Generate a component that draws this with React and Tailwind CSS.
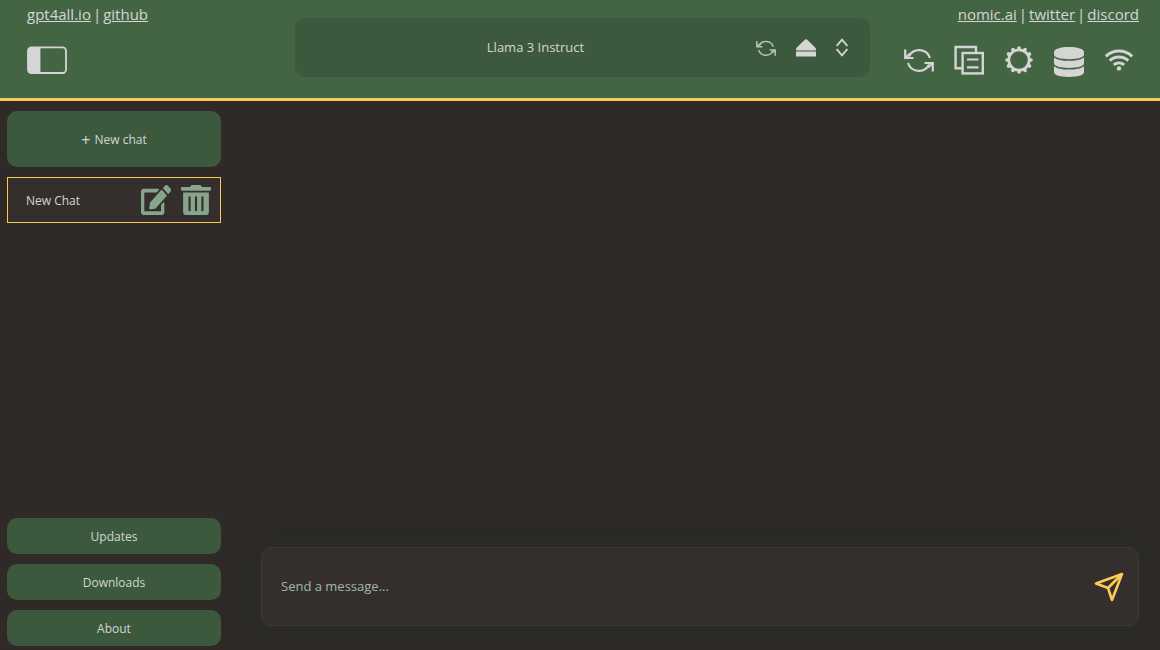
import { useState } from 'react'
import { FaEdit, FaTrashAlt } from 'react-icons/fa'

const models = ['Llama 3 Instruct']

function RefreshIcon({ className }) {
  return (
    <svg viewBox="0 0 30 30" className={className} fill="none" stroke="currentColor" strokeWidth="2.2">
      <path d="M4.8 11.5A11.5 11.5 0 0 1 26 13" />
      <path d="M1.2 4.5V13H9.5M1.5 12.8L6 8.5" />
      <path d="M4 18A11.5 11.5 0 0 0 25.2 19.5" />
      <path d="M28.8 26.5V18H20.5M28.5 18.2L24 22.5" />
    </svg>
  )
}

function CopyIcon() {
  return (
    <svg viewBox="0 0 30 30" className="size-[30px]" fill="none" stroke="currentColor" strokeWidth="2.4">
      <path d="M8 23.3H1.6V2H22V7.5" />
      <rect x="8.6" y="8" width="20.2" height="20.4" />
      <path d="M13 14.5H24.5M13 22.3H24.5" strokeWidth="2.2" />
    </svg>
  )
}

function GearIcon() {
  return (
    <svg viewBox="0 0 30 30" className="size-[30px]" fill="none" stroke="currentColor">
      <circle cx="15" cy="15" r="10.2" strokeWidth="2.8" />
      {/* 12 teeth */}
      <circle
        cx="15" cy="15" r="12" strokeWidth="3.6" strokeLinecap="round"
        pathLength="120" strokeDasharray=".2 9.8" strokeDashoffset=".1"
      />
    </svg>
  )
}

function DatabaseIcon() {
  return (
    <svg viewBox="0 0 30 34" className="h-[34px] w-[30px]" fill="currentColor">
      <path d="M0 9C0 6 6.5 4 15 4S30 6 30 9V11.5C30 14.3 23.5 16.2 15 16.2S0 14.3 0 11.5Z" />
      <path d="M0 14.4C3 16.8 9 17.8 15 17.8S27 16.8 30 14.4V20.3C30 23.1 23.5 25 15 25S0 23.1 0 20.3Z" />
      <path d="M0 23.2C3 25.6 9 26.6 15 26.6S27 25.6 30 23.2V29.3C30 32.1 23.5 34 15 34S0 32.1 0 29.3Z" />
    </svg>
  )
}

function WifiIcon() {
  return (
    <svg viewBox="0 0 30 30" className="size-[30px]" fill="none" stroke="currentColor" strokeWidth="3">
      <path d="M1.8 11.4A19 19 0 0 1 28.2 11.4" />
      <path d="M5.8 15.6A13.4 13.4 0 0 1 24.2 15.6" />
      <path d="M9.8 19.8A8 8 0 0 1 20.2 19.8" />
      <circle cx="15" cy="23.4" r="2.2" fill="currentColor" stroke="none" />
    </svg>
  )
}

function PanelIcon() {
  return (
    <svg viewBox="0 0 40 28" className="h-7 w-10" fill="none" stroke="currentColor" strokeWidth="1.8">
      <rect x="1" y="1.4" width="38" height="25.6" rx="3.4" />
      <path d="M4 1.4H13.4V27H4A3 3 0 0 1 1 24V4.4A3 3 0 0 1 4 1.4Z" fill="currentColor" stroke="none" />
    </svg>
  )
}

function EjectIcon() {
  return (
    <svg viewBox="0 0 20 20" className="size-5" fill="currentColor">
      <path d="M9 1.6Q10 .7 11 1.6L19.4 9.8Q20.2 10.8 20 12.4H0Q-.2 10.8 .6 9.8Z" />
      <rect y="13.4" width="20" height="5.2" rx=".6" />
    </svg>
  )
}

function UpDownIcon() {
  return (
    <svg viewBox="0 0 12 20" className="pointer-events-none h-5 w-3" fill="none" stroke="currentColor" strokeWidth="1.8">
      <path d="M.6 8L6 1.6L11.4 8M.6 11L6 17.4L11.4 11" />
    </svg>
  )
}

function SendIcon() {
  return (
    <svg viewBox="0 0 30 30" className="size-[30px]" fill="none" stroke="currentColor" strokeWidth="2.6" strokeLinejoin="round">
      <path d="M28 2L2 11.5L14 16L18 28Z" />
      <path d="M14 16L28 2" />
    </svg>
  )
}

function SideButton({ children }) {
  return (
    <button type="button" className="h-9 rounded-[10px] bg-[#3d593d] pt-0.5 text-xs text-[#d2d6d0]">
      {children}
    </button>
  )
}

export default function App() {
  const [model, setModel] = useState(models[0])
  const [message, setMessage] = useState('')
  const [sidebarOpen, setSidebarOpen] = useState(true)

  return (
    <div className="flex min-h-screen flex-col bg-[#2f2a28] font-['Open_Sans','Noto_Sans',sans-serif] text-[#d5d5d5]">
      <header className="grid grid-cols-[295px_1fr_290px] border-b-3 border-[#f7ca55] bg-[#446544] pb-[21px]">
        <div className="flex flex-col items-start gap-[22px] pt-1 pl-[27px]">
          <nav className="flex gap-0.5 text-[15px] leading-5">
            <a href="#gpt4all" className="underline">gpt4all.io</a>
            <span>|</span>
            <a href="#github" className="underline">github</a>
          </nav>
          <button type="button" aria-label="Toggle chat list" onClick={() => setSidebarOpen(!sidebarOpen)}>
            <PanelIcon />
          </button>
        </div>

        {/* Model picker */}
        <div className="mt-[18px] flex h-[59px] items-center rounded-[10px] bg-[#3d593d] pr-[22px] pl-5">
          <select
            aria-label="Model"
            value={model}
            onChange={e => setModel(e.target.value)}
            className="h-full min-w-0 flex-1 appearance-none bg-transparent text-center text-[13px] outline-none"
          >
            {models.map(m => <option key={m}>{m}</option>)}
          </select>
          <div className="flex items-center gap-5">
            <button type="button" aria-label="Reload model" className="text-[#b4c4b8]"><RefreshIcon className="size-5" /></button>
            <button type="button" aria-label="Eject model"><EjectIcon /></button>
            <UpDownIcon />
          </div>
        </div>

        <div className="flex flex-col items-end gap-[19px] pt-1 pr-[21px]">
          <nav className="flex gap-0.5 text-[15px] leading-5">
            <a href="#nomic" className="underline">nomic.ai</a>
            <span>|</span>
            <a href="#twitter" className="underline">twitter</a>
            <span>|</span>
            <a href="#discord" className="underline">discord</a>
          </nav>
          <div className="flex items-center gap-5 pr-[5px]">
            <button type="button" aria-label="Reset chat"><RefreshIcon className="size-[30px]" /></button>
            <button type="button" aria-label="Copy chat"><CopyIcon /></button>
            <button type="button" aria-label="Settings"><GearIcon /></button>
            <button type="button" aria-label="Collections"><DatabaseIcon /></button>
            <button type="button" aria-label="Network"><WifiIcon /></button>
          </div>
        </div>
      </header>

      <div className="flex flex-1">
        {sidebarOpen && (
          <aside className="flex w-[221px] shrink-0 flex-col gap-[10px] pt-[10px] pb-1 pl-[7px]">
            <button type="button" className="flex h-14 items-center justify-center gap-1 rounded-[10px] bg-[#3d593d] pt-0.5 text-xs text-[#d2d6d0]">
              <span className="text-base">+</span> New chat
            </button>
            <div className="flex h-[46px] items-center gap-[10px] border border-[#f7ca55] bg-[#342f2d] pr-[9px] pl-[18px]">
              <span className="flex-1 pt-0.5 text-xs">New Chat</span>
              <button type="button" aria-label="Rename chat" className="text-[#86a58b]">
                <FaEdit preserveAspectRatio="none" className="size-[30px]" />
              </button>
              <button type="button" aria-label="Delete chat" className="text-[#86a58b]">
                <FaTrashAlt preserveAspectRatio="none" className="size-[30px]" />
              </button>
            </div>
            <div className="mt-auto flex flex-col gap-[10px]">
              <SideButton>Updates</SideButton>
              <SideButton>Downloads</SideButton>
              <SideButton>About</SideButton>
            </div>
          </aside>
        )}

        <main className="flex flex-1 flex-col justify-end overflow-x-clip pr-[21px] pb-6 pl-10">
          <form
            onSubmit={e => { e.preventDefault(); setMessage('') }}
            className="flex h-[79px] items-center gap-5 rounded-[10px] border border-[#3b3936] bg-[#342f2d] pr-[14px] pl-[19px] shadow-[0_0_16px_22px_#2b2a26]"
          >
            <input
              type="text"
              aria-label="Message"
              placeholder="Send a message..."
              value={message}
              onChange={e => setMessage(e.target.value)}
              className="min-w-0 flex-1 bg-transparent text-[13px] outline-none placeholder:text-[#a3b9a3]"
            />
            <button type="submit" aria-label="Send" className="text-[#fccb51]">
              <SendIcon />
            </button>
          </form>
        </main>
      </div>
    </div>
  )
}
